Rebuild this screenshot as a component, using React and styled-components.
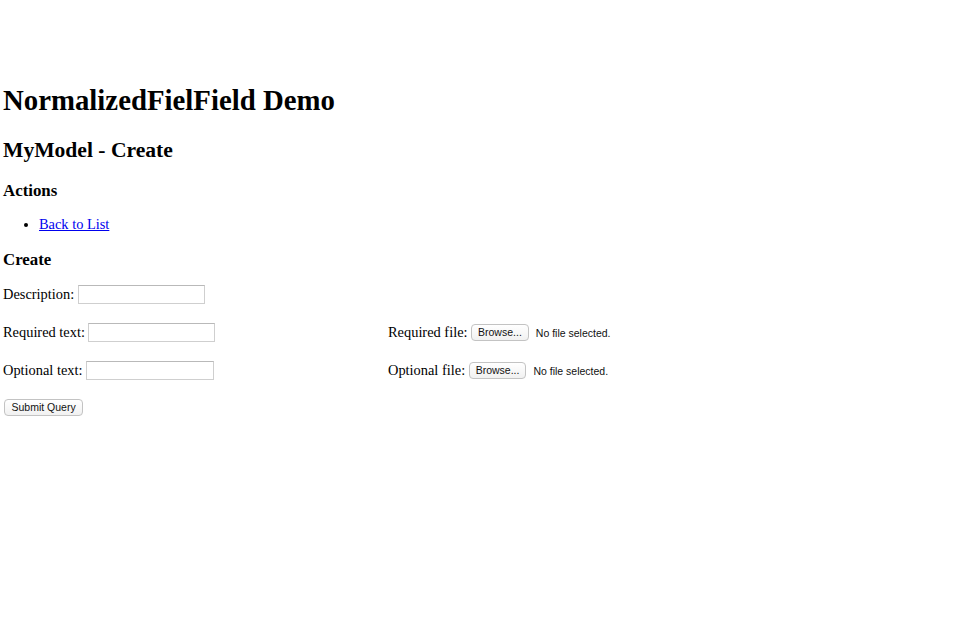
import React from 'react'
import styled, { createGlobalStyle } from 'styled-components'

const GlobalStyle = createGlobalStyle`
  html, body {
    margin: 0;
    padding: 0;
    background: #ffffff;
  }
  body {
    font-family: "Liberation Serif", "Times New Roman", serif;
    font-size: 14.4px;
    color: #000000;
  }
`

const fields = [
  { left: { label: 'Description:', width: 127 } },
  { left: { label: 'Required text:', width: 127 }, right: { label: 'Required file:' } },
  { left: { label: 'Optional text:', width: 128 }, right: { label: 'Optional file:' } },
]

const App = () => {
  return (
    <Page>
      <GlobalStyle />
      <Title>NormalizedFielField Demo</Title>
      <SubTitle>MyModel - Create</SubTitle>
      <Section>Actions</Section>
      <ActionList>
        <li><LinkTag href="#">Back to List</LinkTag></li>
      </ActionList>
      <Section>Create</Section>
      <Form onSubmit={(e) => e.preventDefault()}>
        <FieldGrid>
          {fields.map((row, i) => (
            <React.Fragment key={i}>
              <Field>
                <span>{row.left.label}</span>
                <TextInput type="text" $width={row.left.width} />
              </Field>
              <Field>
                {row.right && (
                  <>
                    <span>{row.right.label}</span>
                    <FilePicker>
                      <BrowseButton type="button">Browse...</BrowseButton>
                      <FileStatus>No file selected.</FileStatus>
                    </FilePicker>
                  </>
                )}
              </Field>
            </React.Fragment>
          ))}
        </FieldGrid>
        <SubmitButton type="submit">Submit Query</SubmitButton>
      </Form>
    </Page>
  )
}

export default App

const Page = styled.div`
  padding: 65px 0 40px 3px;
`

const Title = styled.h1`
  font-size: 28.8px;
  font-weight: bold;
  margin: 19px 0 21px;
`

const SubTitle = styled.h2`
  font-size: 21.6px;
  font-weight: bold;
  margin: 18px 0;
`

const Section = styled.h3`
  font-size: 16.85px;
  font-weight: bold;
  margin: 16px 0 14px;
`

const ActionList = styled.ul`
  margin: 15px 0 17px;
  padding-left: 36px;
  list-style: disc;
`

const LinkTag = styled.a`
  color: #0000ee;
  text-decoration: underline;
`

const Form = styled.form`
  margin: 0;
`

const FieldGrid = styled.div`
  display: grid;
  grid-template-columns: 385px auto;
  grid-auto-rows: 21px;
  row-gap: 17px;
  margin: 0 0 18px;
`

const Field = styled.div`
  display: flex;
  align-items: center;
  gap: 3.5px;
  height: 21px;
  white-space: nowrap;
`

const TextInput = styled.input`
  box-sizing: border-box;
  width: ${(p) => p.$width}px;
  height: 19px;
  margin: 0;
  padding: 1px 3px;
  border: 1px solid #cfcfcf;
  border-top-color: #b9b9b9;
  font-size: 12px;
  background: #ffffff;
  outline: none;
`

const FilePicker = styled.span`
  display: inline-flex;
  align-items: center;
  gap: 7px;
`

const BrowseButton = styled.button`
  box-sizing: border-box;
  height: 17px;
  padding: 0 6px;
  border: 1px solid #c3c3c3;
  border-radius: 4px;
  background: linear-gradient(#ffffff, #f1f1f1);
  font-family: "Liberation Sans", Arial, sans-serif;
  font-size: 10.5px;
  color: #111111;
  line-height: 15px;
`

const FileStatus = styled.span`
  font-family: "Liberation Sans", Arial, sans-serif;
  font-size: 10.5px;
  color: #111111;
`

const SubmitButton = styled.button`
  box-sizing: border-box;
  display: block;
  height: 17px;
  margin: 0 0 0 1px;
  padding: 0 6.5px;
  border: 1px solid #c3c3c3;
  border-radius: 4px;
  background: linear-gradient(#ffffff, #f1f1f1);
  font-family: "Liberation Sans", Arial, sans-serif;
  font-size: 10.5px;
  color: #111111;
  line-height: 15px;
`
